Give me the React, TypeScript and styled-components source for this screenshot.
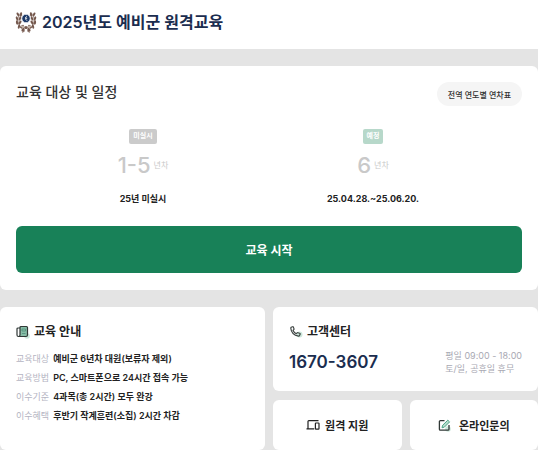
import React from 'react';
import styled, { createGlobalStyle } from 'styled-components';

const GlobalStyle = createGlobalStyle`
  *, *::before, *::after { box-sizing: border-box; }
  body {
    margin: 0;
    background: #fff;
    color: #222;
    font-family: Inter, "Noto Sans CJK KR", sans-serif;
  }
  h1, h2, p, dl, dd { margin: 0; }
  button { font: inherit; border: 0; cursor: pointer; }
`;

const Page = styled.div`
  padding-right: 6px;
`;

const Header = styled.header`
  display: flex;
  align-items: center;
  gap: 5px;
  height: 49px;
  padding: 0 15px 6px;
`;

const PageTitle = styled.h1`
  color: #1b2d4f;
  font-size: 16px;
  font-weight: 600;
  line-height: 24px;
  white-space: nowrap;
`;

const Main = styled.main`
  display: grid;
  gap: 17px;
  padding-top: 17px;
  background: #e4e4e4;
`;

const Card = styled.section`
  border-radius: 6px;
  background: #fff;
`;

const ScheduleCard = styled(Card)`
  padding: 16px 16px 17px;
`;

const ScheduleHead = styled.div`
  display: flex;
  align-items: center;
  justify-content: space-between;
`;

const ScheduleTitle = styled.h2`
  padding-bottom: 4px;
  color: #333;
  font-size: 14px;
  font-weight: 500;
  line-height: 20px;
`;

const PillButton = styled.button`
  height: 24px;
  padding: 0 11px;
  border-radius: 12px;
  background: #f5f5f5;
  color: #333;
  font-size: 8px;
  font-weight: 500;
`;

const Terms = styled.div`
  display: grid;
  grid-template-columns: 1fr 1fr;
  padding: 23px 34px 19px 12px;
`;

const Term = styled.div`
  display: flex;
  flex-direction: column;
  align-items: center;
`;

const Badge = styled.span<{ $scheduled?: boolean }>`
  height: 15px;
  padding: 0 4px;
  border-radius: 2px;
  background: ${(p) => (p.$scheduled ? '#b7d8ca' : '#cbcbcb')};
  color: #fff;
  font-size: 7px;
  font-weight: 600;
  line-height: 13px;
`;

const Years = styled.p`
  display: flex;
  align-items: center;
  gap: 3px;
  margin-top: 7px;
  color: #c9c9c9;
  font-size: 22px;
  font-weight: 500;
  line-height: 28px;
`;

const YearUnit = styled.small`
  font-size: 8px;
  font-weight: 400;
`;

const Period = styled.p`
  margin-top: 12px;
  font-size: 9px;
  font-weight: 700;
  line-height: 16px;
`;

const StartButton = styled.button`
  width: 100%;
  height: 47px;
  border-radius: 6px;
  background: #188158;
  color: #fff;
  font-size: 12px;
  font-weight: 600;
`;

const LowerGrid = styled.div`
  display: grid;
  grid-template-columns: 1fr 1fr;
  gap: 8px;
`;

const SideColumn = styled.div`
  display: grid;
  grid-template-rows: auto auto;
  gap: 9px;
`;

const InfoCard = styled(Card)`
  padding: 16px;
`;

const CardTitle = styled.h2`
  display: flex;
  align-items: center;
  gap: 4px;
  font-size: 12px;
  font-weight: 600;
  line-height: 18px;
`;

const Facts = styled.dl`
  display: grid;
  grid-template-columns: auto 1fr;
  column-gap: 4px;
  margin-top: 8px;
  font-size: 9px;
  line-height: 19px;
  white-space: nowrap;
`;

const FactName = styled.dt`
  color: #b4b4c2;
`;

const FactValue = styled.dd`
  font-weight: 600;
`;

const Contact = styled.div`
  display: flex;
  align-items: center;
  justify-content: space-between;
  margin-top: 8px;
`;

const Phone = styled.a`
  color: #1b2d4f;
  font-size: 17px;
  font-weight: 600;
  line-height: 26px;
  text-decoration: none;
`;

const Hours = styled.p`
  color: #a9a9b3;
  font-size: 9px;
  line-height: 13px;
  white-space: nowrap;
`;

const Links = styled.nav`
  display: grid;
  grid-template-columns: 1fr 1fr;
  gap: 8px;
`;

const LinkCard = styled.a<{ $gap: number }>`
  display: flex;
  align-items: center;
  justify-content: center;
  gap: ${(p) => p.$gap}px;
  height: 50px;
  border-radius: 6px;
  background: #fff;
  color: #222;
  font-size: 11px;
  font-weight: 600;
  text-decoration: none;
  white-space: nowrap;
`;

const leaves = [
  [9, 20, 35], [5, 17, 15], [3, 13, -5], [3, 9, -18], [4, 5, -30],
  [8, 17, 55], [6, 13, 35], [6, 9, 18], [7, 5, 10],
];

const Emblem = () => (
  <svg width="22" height="22" viewBox="1 1.5 22 22" aria-hidden="true">
    {[false, true].map((flip) => (
      <g key={String(flip)} transform={flip ? 'translate(24 0) scale(-1 1)' : undefined} fill="#75594e">
        <path d="M7 3C2 8 3 17 11 22" fill="none" stroke="#9a8378" strokeWidth="0.8" />
        {leaves.map(([x, y, r]) => (
          <ellipse key={`${x}-${y}`} cx={x} cy={y} rx="1.1" ry="2.2" transform={`rotate(${r} ${x} ${y})`} />
        ))}
      </g>
    ))}
    <circle cx="12" cy="9" r="4.2" fill="#1d3a68" stroke="#e5e8ee" strokeWidth="0.9" />
    <path d="M12.8 6.6c-1.6.8-1.8 3.4.2 4.6M11.8 8.8h1.4" fill="none" stroke="#fff" strokeWidth="0.9" />
    <path d="M7 15.5l5 2 5-2v2l-5 2-5-2z" fill="#c2b2a7" />
    <circle cx="12" cy="18" r="1.5" fill="#75594e" />
    <path d="M10.5 20l-2 3M13.5 20l2 3" stroke="#75594e" strokeWidth="1.2" />
  </svg>
);

const GuideIcon = () => (
  <svg width="14" height="14" viewBox="0 0 14 14" fill="none" aria-hidden="true">
    <circle cx="11" cy="11" r="2.8" fill="#cde8dc" />
    <path d="M4 1.5h6.5a1 1 0 0 1 1 1V10a1.5 1.5 0 0 1-1.5 1.5H3L4 10z" fill="#86bca6" />
    <path d="M4 3H2a1 1 0 0 0-1 1v6a1.5 1.5 0 0 0 3 0V2.5a1 1 0 0 1 1-1h5.5a1 1 0 0 1 1 1V10a1.5 1.5 0 0 1-1.5 1.5H2.5" stroke="#303836" strokeWidth="1.2" />
    <path d="M6 4h3.5v2H6zM6 8.5h3.5" stroke="#4f8f78" strokeWidth="0.8" />
  </svg>
);

const PhoneIcon = () => (
  <svg width="14" height="14" viewBox="0 0 14 14" fill="none" aria-hidden="true">
    <circle cx="10.5" cy="9.5" r="3" fill="#cde8dc" />
    <path d="M2.2 2.3l1.3-.6c.4-.2.8 0 .9.4l.6 1.8c.1.3 0 .6-.2.8l-.8.8c.8 1.5 1.8 2.5 3.3 3.2l.8-.8c.2-.2.5-.3.8-.2l1.8.6c.4.1.6.5.4.9l-.6 1.4c-.2.4-.5.6-.9.5C5.3 10.4 2.2 7.5 1.8 3.2c0-.4.1-.7.4-.9z" stroke="#3e4443" strokeWidth="1.2" strokeLinejoin="round" />
  </svg>
);

const DevicesIcon = () => (
  <svg width="14" height="12" viewBox="0 0 14 12" fill="none" stroke="#222" strokeWidth="1.2" aria-hidden="true">
    <path d="M12.5 1.6H2.8a.8.8 0 0 0-.8.8v6.8M.5 9.8h7.8" />
    <rect x="9.4" y="4" width="3.6" height="6.2" rx="0.6" />
  </svg>
);

const EditIcon = () => (
  <svg width="13" height="13" viewBox="0 0 13 13" fill="none" aria-hidden="true">
    <circle cx="10" cy="10" r="2.8" fill="#cde8dc" />
    <path d="M6.5 1.6H2.4a1 1 0 0 0-1 1v7.6a1 1 0 0 0 1 1H10a1 1 0 0 0 1-1V6" stroke="#303836" strokeWidth="1.3" />
    <path d="M4 8.8l.6-2.5L9.8 1.2l1.8 1.7-5.2 5.2z" fill="#b4dccb" stroke="#4ba586" strokeWidth="1" strokeLinejoin="round" />
  </svg>
);

const facts = [
  ['교육대상', '예비군 6년차 대원(보류자 제외)'],
  ['교육방법', 'PC, 스마트폰으로 24시간 접속 가능'],
  ['이수기준', '4과목(총 2시간) 모두 완강'],
  ['이수혜택', '후반기 작계훈련(소집) 2시간 차감'],
];

export default function App() {
  return (
    <>
      <GlobalStyle />
      <Page>
        <Header>
          <Emblem />
          <PageTitle>2025년도 예비군 원격교육</PageTitle>
        </Header>
        <Main>
          <ScheduleCard>
            <ScheduleHead>
              <ScheduleTitle>교육 대상 및 일정</ScheduleTitle>
              <PillButton type="button">전역 연도별 연차표</PillButton>
            </ScheduleHead>
            <Terms>
              <Term>
                <Badge>미실시</Badge>
                <Years>1-5<YearUnit>년차</YearUnit></Years>
                <Period>25년 미실시</Period>
              </Term>
              <Term>
                <Badge $scheduled>예정</Badge>
                <Years>6<YearUnit>년차</YearUnit></Years>
                <Period>25.04.28.~25.06.20.</Period>
              </Term>
            </Terms>
            <StartButton type="button">교육 시작</StartButton>
          </ScheduleCard>
          <LowerGrid>
            <InfoCard>
              <CardTitle><GuideIcon />교육 안내</CardTitle>
              <Facts>
                {facts.map(([name, value]) => (
                  <React.Fragment key={name}>
                    <FactName>{name}</FactName>
                    <FactValue>{value}</FactValue>
                  </React.Fragment>
                ))}
              </Facts>
            </InfoCard>
            <SideColumn>
              <InfoCard>
                <CardTitle><PhoneIcon />고객센터</CardTitle>
                <Contact>
                  <Phone href="tel:1670-3607">1670-3607</Phone>
                  <Hours>평일 09:00 - 18:00<br />토/일, 공휴일 휴무</Hours>
                </Contact>
              </InfoCard>
              <Links>
                <LinkCard href="#remote" $gap={5}><DevicesIcon />원격 지원</LinkCard>
                <LinkCard href="#inquiry" $gap={8}><EditIcon />온라인문의</LinkCard>
              </Links>
            </SideColumn>
          </LowerGrid>
        </Main>
      </Page>
    </>
  );
}
